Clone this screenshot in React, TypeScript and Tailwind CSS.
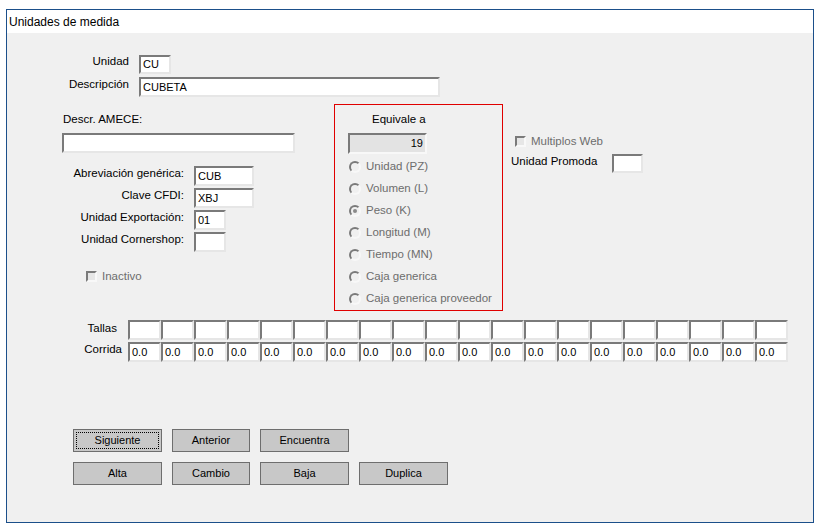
import React from "react";

const font = { fontFamily: '"Liberation Sans", Arial, sans-serif' };

const sunken =
  "border-2 border-t-[#7a7a7a] border-l-[#7a7a7a] border-r-[#e6e6e6] border-b-[#e6e6e6] bg-white text-[11px] text-black leading-none flex items-center px-[2px]";

function Field({ w, h = 20, value = "" }: { w: number; h?: number; value?: string }) {
  return (
    <div className={sunken} style={{ width: w, height: h }}>
      {value}
    </div>
  );
}

function Radio({ label, checked = false }: { label: string; checked?: boolean }) {
  return (
    <div className="flex items-center h-[22px] text-[11.5px] text-[#6d6d6d]">
      <div className="w-[12px] h-[12px] rounded-full border-2 border-t-[#7a7a7a] border-l-[#7a7a7a] border-r-[#f8f8f8] border-b-[#f8f8f8] bg-[#f0f0f0] flex items-center justify-center ml-[14px]">
        {checked && <div className="w-[4px] h-[4px] rounded-full bg-[#8a8a8a]" />}
      </div>
      <span className="ml-[5px]">{label}</span>
    </div>
  );
}

function Check({ label }: { label: string }) {
  return (
    <div className="flex items-center text-[11.5px] text-[#6d6d6d]">
      <div className="w-[11px] h-[11px] border-2 border-t-[#7a7a7a] border-l-[#7a7a7a] border-r-[#f8f8f8] border-b-[#f8f8f8] bg-[#e6e6e6]" />
      <span className="ml-[5px]">{label}</span>
    </div>
  );
}

function Btn({ label, w, focus = false }: { label: string; w: number; focus?: boolean }) {
  return (
    <div
      className="h-[23px] bg-[#c8c8c8] border border-[#6e6e6e] text-[11px] text-black flex items-center justify-center relative"
      style={{ width: w }}
    >
      {focus && <div className="absolute inset-[2px] border border-dotted border-black" />}
      {label}
    </div>
  );
}

const leftRows: [string, number, string][] = [
  ["Abreviación genérica:", 60, "CUB"],
  ["Clave CFDI:", 60, "XBJ"],
  ["Unidad Exportación:", 32, "01"],
  ["Unidad Cornershop:", 32, ""],
];

const radios = [
  "Unidad (PZ)",
  "Volumen (L)",
  "Peso (K)",
  "Longitud (M)",
  "Tiempo (MN)",
  "Caja generica",
  "Caja generica proveedor",
];

export default function App() {
  const cells = Array.from({ length: 20 });
  return (
    <div className="w-[820px] h-[528px] bg-white pt-[9px] pl-[6px]" style={font}>
      <div className="w-[808px] h-[514px] border border-[#1b4f8a] flex flex-col">
        <div className="h-[23px] bg-white text-[12px] text-black flex items-center pl-[2px]">
          Unidades de medida
        </div>
        <div className="flex-1 bg-[#f0f0f0] pt-[22px] text-black">
          <div className="flex items-center">
            <div className="w-[122px] text-right text-[11.5px] -mt-[5px]">Unidad</div>
            <div className="ml-[10px]">
              <Field w={32} h={19} value="CU" />
            </div>
          </div>
          <div className="flex items-center mt-[3px]">
            <div className="w-[122px] text-right text-[11.5px] -mt-[4px]">Descripción</div>
            <div className="ml-[10px]">
              <Field w={301} value="CUBETA" />
            </div>
          </div>

          <div className="flex mt-[7px]">
            <div className="w-[272px] ml-[55px] flex flex-col">
              <div className="text-[11.5px] mt-[7px] ml-[1px] h-[16px]">Descr. AMECE:</div>
              <div className="mt-[6px]">
                <Field w={233} />
              </div>
              <div className="mt-[13px] flex flex-col gap-[2px]">
                {leftRows.map(([l, w, v]) => (
                  <div key={l} className="flex items-center">
                    <div className="w-[122px] text-right text-[11.5px] -mt-[4px]">{l}</div>
                    <div className="ml-[10px]">
                      <Field w={w} value={v} />
                    </div>
                  </div>
                ))}
              </div>
              <div className="mt-[16px] ml-[24px]">
                <Check label="Inactivo" />
              </div>
            </div>

            <div className="w-[169px] h-[207px] border border-[#e00000] flex flex-col">
              <div className="text-[11.5px] pl-[37px] mt-[6px] h-[16px]">Equivale a</div>
              <div className="ml-[13px] mt-[6px] w-[79px] h-[21px] border-2 border-t-[#7a7a7a] border-l-[#7a7a7a] border-r-[#f8f8f8] border-b-[#f8f8f8] bg-[#e3e3e3] text-[11px] flex items-center justify-end pr-[2px]">
                19
              </div>
              <div className="mt-[2px] flex flex-col">
                {radios.map((r) => (
                  <Radio key={r} label={r} checked={r === "Peso (K)"} />
                ))}
              </div>
            </div>

            <div className="flex flex-col ml-[8px]">
              <div className="mt-[29px] ml-[4px]">
                <Check label="Multiplos Web" />
              </div>
              <div className="flex items-center mt-[4px]">
                <div className="text-[11.5px] text-black w-[101px] -mt-[4px]">Unidad Promoda</div>
                <Field w={31} h={19} />
              </div>
            </div>
          </div>

          <div className="mt-[9px] flex flex-col gap-[2px]">
            <div className="flex items-center">
              <div className="w-[110px] text-right text-[11.5px] -mt-[3px]">Tallas</div>
              <div className="ml-[11px] flex">
                {cells.map((_, i) => (
                  <Field key={i} w={33} />
                ))}
              </div>
            </div>
            <div className="flex items-center">
              <div className="w-[115px] text-right text-[11.5px] -mt-[5px]">Corrida</div>
              <div className="ml-[6px] flex">
                {cells.map((_, i) => (
                  <Field key={i} w={33} value="0.0" />
                ))}
              </div>
            </div>
          </div>

          <div className="mt-[67px] ml-[66px] flex flex-col gap-[10px]">
            <div className="flex gap-[10px]">
              <Btn label="Siguiente" w={89} focus />
              <Btn label="Anterior" w={78} />
              <Btn label="Encuentra" w={89} />
            </div>
            <div className="flex gap-[10px]">
              <Btn label="Alta" w={89} />
              <Btn label="Cambio" w={78} />
              <Btn label="Baja" w={89} />
              <Btn label="Duplica" w={89} />
            </div>
          </div>
        </div>
      </div>
    </div>
  );
}
